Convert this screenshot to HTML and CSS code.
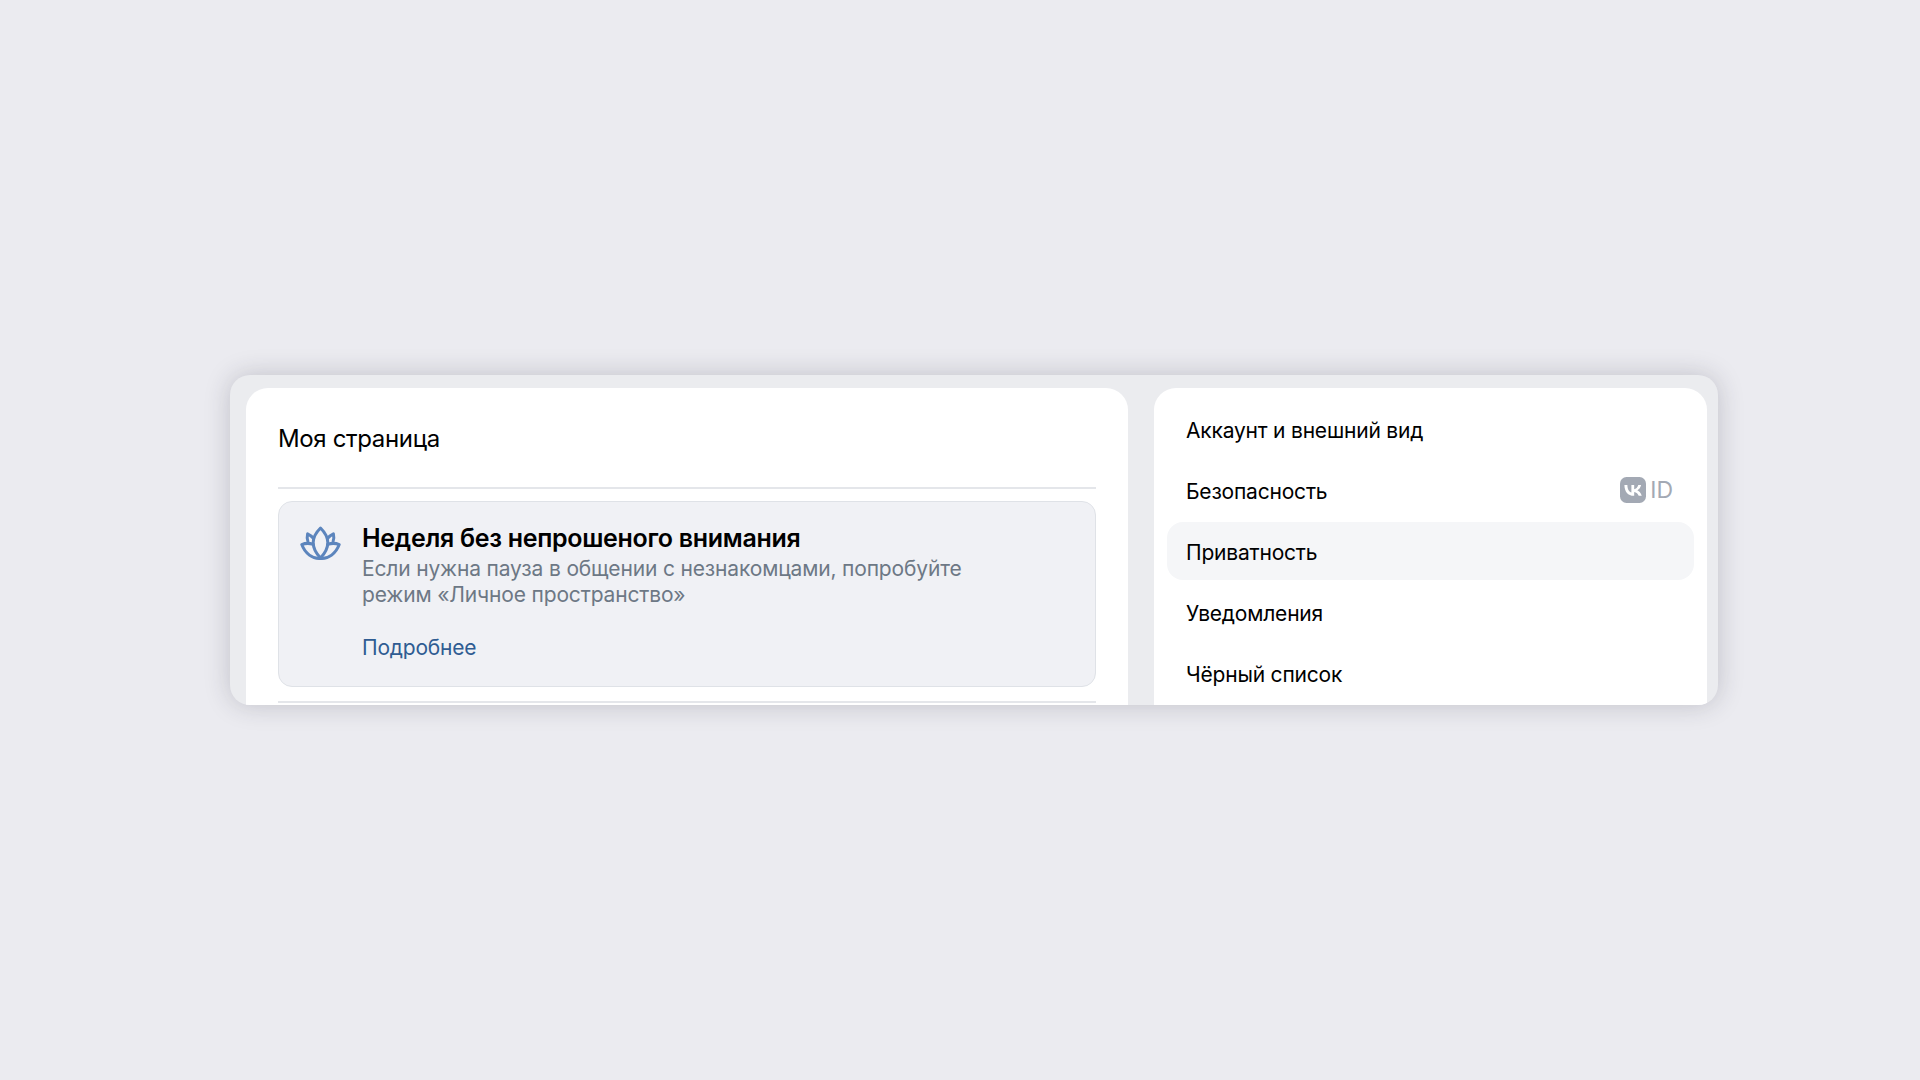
FILE: index.html
```html
<!DOCTYPE html>
<html lang="ru">
<head>
<meta charset="utf-8">
<title>Настройки</title>
<link rel="stylesheet" href="styles.css">
</head>
<body>
<main class="window">
  <section class="panel panel-main">
    <h1 class="page-title">Моя страница</h1>
    <div class="divider"></div>
    <article class="notice">
      <svg class="notice-icon" viewBox="0 0 41 34" width="41" height="34" fill="none" stroke="#5c85bd" stroke-width="3" stroke-linejoin="round" stroke-linecap="round" aria-hidden="true">
        <path d="M20.5 2C16.3 6.2 13.2 11 13.2 16.6C13.2 22.4 16.2 27.6 20.5 32C24.8 27.6 27.8 22.4 27.8 16.6C27.8 11 24.7 6.2 20.5 2Z"/>
        <path d="M13.6 12.6C11.9 10.6 9.9 8.9 7.6 7.9C7 10.4 7.1 13 7.9 15.4"/>
        <path d="M27.4 12.6C29.1 10.6 31.1 8.9 33.4 7.9C34 10.4 33.9 13 33.1 15.4"/>
        <path d="M20.5 32.4C12.6 33.2 5 27.4 1.8 18.6C5 17.2 9 17 13 18.2"/>
        <path d="M20.5 32.4C28.4 33.2 36 27.4 39.2 18.6C36 17.2 32 17 28 18.2"/>
      </svg>
      <div class="notice-body">
        <h2 class="notice-title">Неделя без непрошеного внимания</h2>
        <p class="notice-text">Если нужна пауза в общении с незнакомцами, попробуйте<br>режим «Личное пространство»</p>
        <a class="notice-link" href="#">Подробнее</a>
      </div>
    </article>
    <div class="divider divider-bottom"></div>
  </section>
  <nav class="panel panel-menu">
    <a class="menu-item" href="#">Аккаунт и внешний вид</a>
    <a class="menu-item" href="#">Безопасность
      <span class="vkid">
        <svg class="vkid-logo" viewBox="0 0 26 26" width="26" height="26" aria-hidden="true">
          <rect width="26" height="26" rx="6.5" fill="#a3a9b4"/>
          <path fill="#fff" d="M13.85 18.75c-5.93 0-9.31-4.06-9.45-10.83h2.97c.1 4.96 2.29 7.07 4.02 7.5V7.92h2.8v4.28c1.71-.18 3.51-2.13 4.12-4.28h2.8c-.47 2.64-2.42 4.6-3.8 5.4 1.38.65 3.61 2.35 4.45 5.43h-3.08c-.66-2.06-2.31-3.65-4.49-3.87v3.87h-.34z"/>
        </svg>
        <span class="vkid-text">ID</span>
      </span>
    </a>
    <a class="menu-item menu-item-active" href="#">Приватность</a>
    <a class="menu-item" href="#">Уведомления</a>
    <a class="menu-item" href="#">Чёрный список</a>
  </nav>
</main>
</body>
</html>
```
FILE: styles.css
```css
* { box-sizing: border-box; }
html, body { margin: 0; height: 100%; }
body {
  display: flex;
  align-items: center;
  padding-left: 230px;
  background: #ebebf0;
  font-family: Inter, "Noto Sans", sans-serif;
  color: #000;
}
.window {
  display: flex;
  align-items: flex-start;
  gap: 26px;
  width: 1488px;
  height: 330px;
  padding: 13px 11px 0 16px;
  overflow: hidden;
  background: #ebecef;
  border-radius: 20px;
  box-shadow: 0 0 26px rgba(40, 40, 60, 0.22);
}
.panel {
  background: #fff;
  border-radius: 22px 22px 0 0;
  height: 340px;
}
.panel-main { width: 882px; padding: 0 32px; flex: none; }
.panel-menu { width: 553px; padding: 12px 13px; flex: none; display: flex; flex-direction: column; gap: 3px; }
.page-title {
  margin: 0;
  padding-top: 36px;
  height: 99px;
  font-size: 24px;
  line-height: 30px;
  font-weight: 400;
  letter-spacing: -0.35px;
}
.divider { height: 2px; background: #e4e6ea; }
.divider-bottom { margin-top: 14px; }
.notice {
  display: flex;
  margin-top: 12px;
  height: 186px;
  padding: 21px 21px 0;
  background: #f0f1f5;
  border: 1px solid #dfe2e7;
  border-radius: 14px;
}
.notice-icon { flex: none; margin-right: 21px; margin-top: 3px; }
.notice-body { display: flex; flex-direction: column; align-items: flex-start; }
.notice-title { margin: 0; font-size: 25px; line-height: 30px; font-weight: 600; letter-spacing: -0.3px; }
.notice-text { margin: 3px 0 0; font-size: 21px; line-height: 26px; color: #6d7885; letter-spacing: -0.16px; }
.notice-link { margin-top: 27px; font-size: 21px; line-height: 26px; color: #2f5c92; text-decoration: none; letter-spacing: -0.2px; }
.menu-item {
  display: flex;
  align-items: center;
  justify-content: space-between;
  flex: none;
  height: 58px;
  padding: 2px 21px 0 19px;
  border-radius: 16px;
  font-size: 21px;
  color: #000;
  text-decoration: none;
  letter-spacing: -0.2px;
}
.menu-item-active { background: #f5f6f8; }
.vkid { display: flex; align-items: center; gap: 4px; margin-top: -2px; }
.vkid-logo { display: block; }
.vkid-text { font-size: 23px; line-height: 26px; color: #a3a9b4; font-weight: 400; letter-spacing: 0; }
```
